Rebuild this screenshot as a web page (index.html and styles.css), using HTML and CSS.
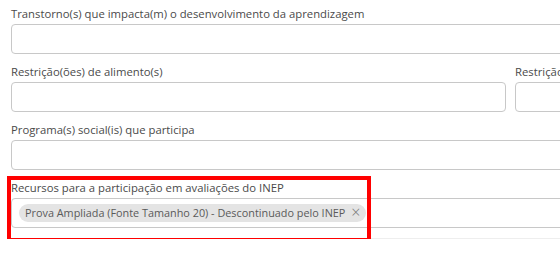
FILE: index.html
```html
<!DOCTYPE html>
<html lang="pt-BR">
<head>
    <meta charset="UTF-8">
    <title>Dados do aluno</title>
    <link rel="stylesheet" href="styles.css">
</head>
<body>
    <div class="form">
        <div class="form-group">
            <label>Transtorno(s) que impacta(m) o desenvolvimento da aprendizagem</label>
            <div class="field"></div>
        </div>

        <div class="form-row">
            <div class="form-group col-main">
                <label>Restrição(ões) de alimento(s)</label>
                <div class="field"></div>
            </div>
            <div class="form-group col-side">
                <label>Restrição(ões) de dieta</label>
                <div class="field"></div>
            </div>
        </div>

        <div class="form-group">
            <label>Programa(s) social(is) que participa</label>
            <div class="field"></div>
        </div>

        <div class="form-group highlighted">
            <label>Recursos para a participação em avaliações do INEP</label>
            <div class="field">
                <span class="chip">Prova Ampliada (Fonte Tamanho 20) - Descontinuado pelo INEP<span class="chip-remove">&times;</span></span>
            </div>
            <div class="highlight-box"></div>
        </div>

        <hr class="divider">
    </div>
</body>
</html>
```

FILE: styles.css
```css
html, body {
    overflow: hidden;
}
body {
    margin: 0;
    font-family: "Open Sans", Arial, sans-serif;
    font-size: 11px;
    color: #555;
    background-color: white;
}
.form {
    width: 1000px;
    padding: 6px 0 0 11px;
}
.form-group {
    position: relative;
    margin-bottom: 10px;
}
label {
    display: block;
    height: 18px;
    line-height: 16px;
    font-size: 11.3px;
    color: #4a4a4a;
}
.field {
    box-sizing: border-box;
    height: 30px;
    border: 1px solid #c8c8c8;
    border-radius: 4px;
    background-color: white;
    padding: 5px 7px;
}
.form-row {
    display: flex;
    gap: 9px;
}
.col-main {
    width: 495px;
}
.col-side {
    flex: 1;
}
.chip {
    display: inline-block;
    height: 18px;
    line-height: 18px;
    padding: 0 5px 0 6px;
    border-radius: 9px;
    background-color: #e4e4e4;
    color: #5a5a5a;
    font-size: 10.85px;
}
.chip-remove {
    display: inline-block;
    margin-left: 6px;
    color: #777;
    font-size: 16px;
    font-weight: 300;
    vertical-align: top;
    line-height: 16px;
}
/* red annotation around the INEP field */
.highlight-box {
    position: absolute;
    left: -4px;
    top: -4px;
    width: 356px;
    height: 58px;
    border: 4px solid #f00;
}
.divider {
    margin: 9px 0 0;
    border: 0;
    border-top: 1px solid #eee;
}
```
